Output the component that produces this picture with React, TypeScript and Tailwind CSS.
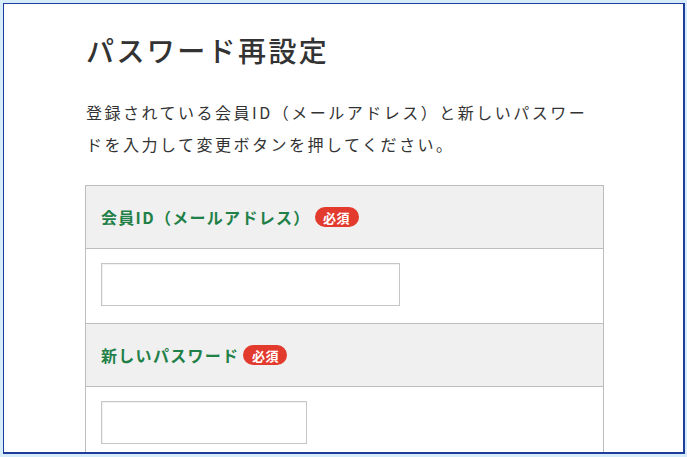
import React from "react";

function Badge() {
  return (
    <span className="ml-[4px] inline-flex h-[20px] w-[44px] items-center justify-center rounded-full bg-[#e23a2d] text-[13px] font-bold leading-none tracking-[0.5px] text-white">
      必須
    </span>
  );
}

function HeaderRow({ label }: { label: string }) {
  return (
    <div className="flex h-[63px] items-center border-b border-[#bdbdbd] bg-[#f0f0f0] pl-[15px]">
      <span className="text-[16px] font-bold leading-none tracking-[1.3px] text-[#1f8048]">{label}</span>
      <Badge />
    </div>
  );
}

function InputRow({ width, last }: { width: string; last?: boolean }) {
  return (
    <div className={last ? "h-[75px] pl-[15px] pt-[14px]" : "h-[75px] border-b border-[#bdbdbd] pl-[15px] pt-[14px]"}>
      <input
        type="text"
        className={`${width} h-[43px] border border-[#c6c6c6] bg-white shadow-[inset_1px_1px_1px_rgba(0,0,0,0.06)] outline-none`}
      />
    </div>
  );
}

export default function App() {
  return (
    <div className="h-[457px] w-[687px] overflow-hidden bg-[#d6ecfb] pb-[3px] pl-[3px] pr-[2px] pt-[3px] font-['Noto_Sans_CJK_JP',sans-serif]">
      <div className="h-full overflow-hidden border-b-2 border-l border-r-2 border-t border-[#1d3d9b] bg-white pl-[82px] pt-[26px]">
        <h1 className="text-[28px] font-medium leading-[40px] tracking-[2.4px] text-[#333333]">パスワード再設定</h1>
        <p className="mt-[26px] text-[16px] leading-[32px] tracking-[2.5px] text-[#333333]">
          登録されている会員ID（メールアドレス）と新しいパスワー
          <br />
          ドを入力して変更ボタンを押してください。
        </p>
        <div className="-ml-px mt-[25px] w-[519px] border border-[#bdbdbd]">
          <HeaderRow label="会員ID（メールアドレス）" />
          <InputRow width="w-[299px]" />
          <HeaderRow label="新しいパスワード" />
          <InputRow width="w-[206px]" last />
        </div>
      </div>
    </div>
  );
}
